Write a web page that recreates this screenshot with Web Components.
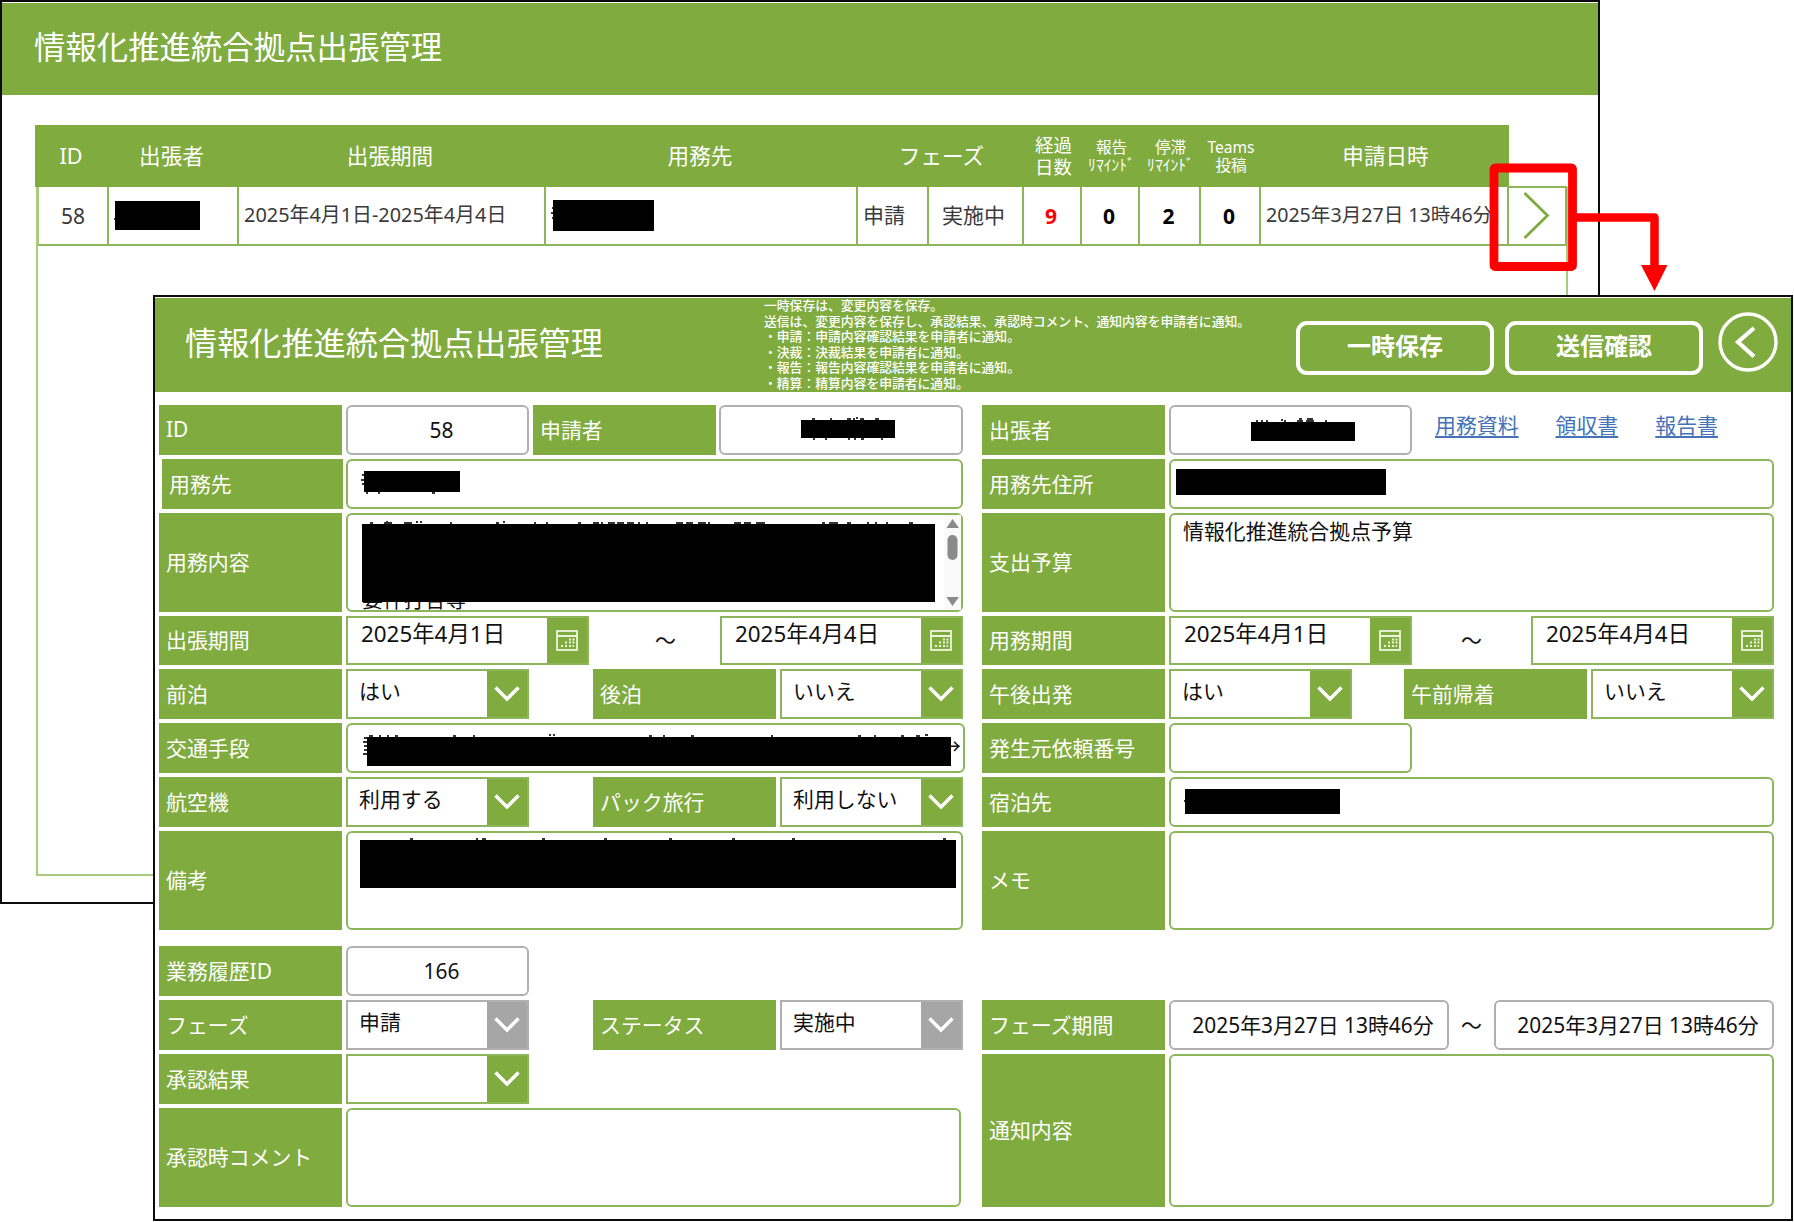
<!DOCTYPE html>
<html lang="ja">
<head>
<meta charset="utf-8">
<title>情報化推進統合拠点出張管理</title>
<style>
  body {
    margin: 0;
    position: relative;
    width: 1794px;
    height: 1222px;
    overflow: hidden;
    background: white;
    color: #111;
    font-family: "Noto Sans", "Noto Sans CJK JP", sans-serif;
    font-size: 20.9px;
    --green: #80ab3f;
    --line: #8db65a;
    --gray: #a6a6a6;
  }

  /* the two windows and the callout float freely on the sheet */
  app-window { position: absolute; }
  #list { left: 0; top: 0; width: 1600px; height: 904px; }
  #detail { left: 153px; top: 295px; width: 1640px; height: 926px; }
  call-out { position: absolute; left: 1489px; top: 162px; }

  .panels { display: flex; gap: 19px; padding: 12px 0 0 4px; }
  .left { width: 804px; }
  .right { width: 792px; }
  .section { display: grid; row-gap: 4px; }
  .main { grid-template-rows: 50px 50px 99px 49px 50px 50px 50px 99px; padding-top: 1px; }
  .review { grid-template-rows: 50px 50px 50px 99px; margin-top: 16px; }
  .tall { grid-row: 3 / span 2; }
  a { color: #4472b8; text-underline-offset: 3px; text-decoration-thickness: 2px; }
</style>
</head>
<body>

<app-window id="list">
  <title-bar class="list">情報化推進統合拠点出張管理</title-bar>
  <trip-list></trip-list>
</app-window>

<app-window id="detail">
  <title-bar class="detail">情報化推進統合拠点出張管理
    <help-text slot="help"></help-text>
    <outline-button slot="actions">一時保存</outline-button>
    <outline-button slot="actions">送信確認</outline-button>
    <back-button slot="actions"></back-button>
  </title-bar>

  <div class="panels">
    <div class="left">
      <div class="section main">
        <form-row>
          <field-label>ID</field-label>
          <text-field readonly center style="width:183px">58</text-field>
          <field-label>申請者</field-label>
          <text-field readonly style="flex:1;margin-left:-1px"><mask-bar marks="M11 -1 h3 M29 -1 h2 M46 -1 h4 M52 -1 h2 M55 -2 h2 M59 -1 h4 M74 -1 h4 M12 19 h2 M24 19 h2 M47 19 h2 M53 19 h2 M60 19 h3 M80 19 h2" style="--x:80px;--y:13px;--w:94px;--h:18px"></mask-bar></text-field>
        </form-row>
        <form-row>
          <field-label style="width:181px;margin-left:3px;margin-right:-1px">用務先</field-label>
          <text-field style="flex:1"><mask-bar marks="M-2 4 h2 M-3 9 h3 M-2 13 h2 M2 22 h2 M14 22 h2 M68 22 h3" style="--x:16px;--y:10px;--w:96px;--h:21px"></mask-bar></text-field>
        </form-row>
        <form-row>
          <field-label>用務内容</field-label>
          <text-field style="flex:1">
            <scroll-notes>要件打合等</scroll-notes>
          </text-field>
        </form-row>
        <form-row>
          <field-label>出張期間</field-label>
          <date-picker>2025年4月1日</date-picker>
          <range-mark style="flex:1;padding-left:22px">～</range-mark>
          <date-picker>2025年4月4日</date-picker>
        </form-row>
        <form-row>
          <field-label>前泊</field-label>
          <drop-down>はい</drop-down>
          <field-label style="margin-left:auto">後泊</field-label>
          <drop-down>いいえ</drop-down>
        </form-row>
        <form-row>
          <field-label>交通手段</field-label>
          <text-field style="flex:1;margin-right:-2px"><mask-bar marks="M-3 1 h3 M-4 5 h4 M-3 9 h3 M-3 13 h3 M-4 17 h4 M2 -1 h4 M12 -1 h2 M20 -1 h2 M28 -1 h3 M86 -1 h3 M106 -1 h2 M182 -2 h2 M186 -2 h2 M282 -1 h3 M296 -1 h2 M324 -1 h3 M404 -1 h2 M491 -1 h3 M507 -1 h2 M534 -1 h3 M549 -1 h4 M558 -2 h3" style="--x:19px;--y:12px;--w:584px;--h:29px"></mask-bar><span style="line-height:42px;margin-left:-11px">→</span></text-field>
        </form-row>
        <form-row>
          <field-label>航空機</field-label>
          <drop-down>利用する</drop-down>
          <field-label style="margin-left:auto">パック旅行</field-label>
          <drop-down>利用しない</drop-down>
        </form-row>
        <form-row>
          <field-label>備考</field-label>
          <text-field style="flex:1"><mask-bar marks="M50 -1 h3 M116 -1 h2 M122 -1 h4 M182 -1 h3 M244 -1 h3 M309 -1 h3 M372 -1 h3 M432 -1 h3 M583 -1 h3" style="--x:12px;--y:7px;--w:596px;--h:48px"></mask-bar></text-field>
        </form-row>
      </div>

      <div class="section review">
        <form-row>
          <field-label>業務履歴ID</field-label>
          <text-field readonly center style="width:183px">166</text-field>
        </form-row>
        <form-row>
          <field-label>フェーズ</field-label>
          <drop-down disabled>申請</drop-down>
          <field-label style="margin-left:auto">ステータス</field-label>
          <drop-down disabled>実施中</drop-down>
        </form-row>
        <form-row>
          <field-label>承認結果</field-label>
          <drop-down></drop-down>
        </form-row>
        <form-row>
          <field-label>承認時コメント</field-label>
          <text-field style="flex:1;margin-right:2px"></text-field>
        </form-row>
      </div>
    </div>

    <div class="right">
      <div class="section main">
        <form-row>
          <field-label>出張者</field-label>
          <text-field readonly style="width:243px"><mask-bar marks="M5 -1 h2 M10 -1 h2 M15 -1 h2 M30 -2 h2 M33 -1 h2 M46 -1 h6 M55 -1 h8 M48 -3 h3 M56 -3 h6 M74 -1 h2" style="--x:80px;--y:15px;--w:104px;--h:19px"></mask-bar></text-field>
          <link-list>
            <a href="#">用務資料</a>
            <a href="#">領収書</a>
            <a href="#">報告書</a>
          </link-list>
        </form-row>
        <form-row>
          <field-label>用務先住所</field-label>
          <text-field style="flex:1"><mask-bar style="--x:5px;--y:8px;--w:210px;--h:26px"></mask-bar></text-field>
        </form-row>
        <form-row>
          <field-label>支出予算</field-label>
          <text-field style="flex:1"><span style="padding:2px 12px">情報化推進統合拠点予算</span></text-field>
        </form-row>
        <form-row>
          <field-label>用務期間</field-label>
          <date-picker>2025年4月1日</date-picker>
          <range-mark style="flex:1">～</range-mark>
          <date-picker>2025年4月4日</date-picker>
        </form-row>
        <form-row>
          <field-label>午後出発</field-label>
          <drop-down>はい</drop-down>
          <field-label style="margin-left:auto">午前帰着</field-label>
          <drop-down>いいえ</drop-down>
        </form-row>
        <form-row>
          <field-label>発生元依頼番号</field-label>
          <text-field style="width:243px"></text-field>
        </form-row>
        <form-row>
          <field-label>宿泊先</field-label>
          <text-field style="flex:1"><mask-bar marks="M-1 12 h1" style="--x:14px;--y:10px;--w:155px;--h:25px"></mask-bar></text-field>
        </form-row>
        <form-row>
          <field-label>メモ</field-label>
          <text-field style="flex:1"></text-field>
        </form-row>
      </div>

      <div class="section review">
        <form-row style="grid-row:2">
          <field-label>フェーズ期間</field-label>
          <text-field readonly center style="width:280px">2025年3月27日 13時46分</text-field>
          <range-mark style="flex:1;margin:0 -4px">～</range-mark>
          <text-field readonly center style="width:280px">2025年3月27日 13時46分</text-field>
        </form-row>
        <form-row class="tall">
          <field-label>通知内容</field-label>
          <text-field style="flex:1"></text-field>
        </form-row>
      </div>
    </div>
  </div>
</app-window>

<call-out></call-out>

<script>
// Attach an open shadow root and fill it with the given markup
function render(element, html) {
  const shadow = element.attachShadow({ mode: "open" });
  const template = document.createElement("template");
  template.innerHTML = html;
  shadow.appendChild(template.content);
}

// Window frame
class AppWindow extends HTMLElement {
  constructor() {
    super();
    render(this, `
    <style>
      :host {
        display: block;
        box-sizing: border-box;
        border: 2px solid #0c0c0c;
        background: white;
        overflow: hidden;
      }
    </style>
    <slot></slot>`);
  }
}

// Green bar on top of a window, with optional help text and actions
class TitleBar extends HTMLElement {
  constructor() {
    super();
    render(this, `
    <style>
      :host {
        display: flex;
        box-sizing: border-box;
        margin-top: 1px;
        background: var(--green);
        color: white;
      }
      :host(.list) { height: 92px; padding-left: 32px; font-size: 31.4px; }
      :host(.detail) { height: 94px; padding: 0 13px 0 30px; font-size: 32.15px; }
      .title { line-height: 88px; white-space: nowrap; }
      :host(.detail) .title { width: 579px; line-height: 90px; }
      .actions { display: flex; margin-left: auto; gap: 11px; padding-top: 14px; }
    </style>
    <div class="title"><slot></slot></div>
    <slot name="help"></slot>
    <div class="actions"><slot name="actions"></slot></div>`);
  }
}

class HelpText extends HTMLElement {
  constructor() {
    super();
    render(this, `
    <style>
      :host { display: block; font-size: 12.8px; font-weight: 500; line-height: 15.5px; white-space: nowrap; }
      div { height: 15.5px; }
    </style>
    <div>一時保存は、変更内容を保存。</div>
    <div>送信は、変更内容を保存し、承認結果、承認時コメント、通知内容を申請者に通知。</div>
    <div>・申請：申請内容確認結果を申請者に通知。</div>
    <div>・決裁：決裁結果を申請者に通知。</div>
    <div>・報告：報告内容確認結果を申請者に通知。</div>
    <div>・精算：精算内容を申請者に通知。</div>`);
  }
}

class OutlineButton extends HTMLElement {
  constructor() {
    super();
    render(this, `
    <style>
      :host {
        display: block;
        box-sizing: border-box;
        width: 198px;
        height: 54px;
        margin-top: 9px;
        border: 4px solid white;
        border-radius: 11px;
        text-align: center;
        font-size: 24px;
        font-weight: bold;
        line-height: 42px;
      }
    </style>
    <slot></slot>`);
  }
}

class BackButton extends HTMLElement {
  constructor() {
    super();
    render(this, `
    <style>
      :host { display: block; margin-left: 4px; height: 60px; }
      svg { display: block; }
    </style>
    <svg width="60" height="60" fill="none" stroke="white">
      <circle cx="30" cy="30" r="28" stroke-width="3.4"/>
      <path d="M36 16 L20 30 L36 44.500" stroke-width="4.2"/>
    </svg>`);
  }
}

// List of trips with its header and a single record
class TripList extends HTMLElement {
  constructor() {
    super();
    render(this, `
    <style>
      :host { display: block; width: 1533px; margin: 30px 0 0 33px; font-size: 21.6px; }
      .head {
        display: grid;
        grid-template-columns: 72px 129px 308px 312px 168px 58px 58px 60px 61px 249px;
        width: 1474px;
        height: 62px;
        align-items: center;
        text-align: center;
        line-height: 30px;
        background: var(--green);
        color: white;
      }
      .head > div { padding-bottom: 1px; }
      .head > .two { font-size: 18.4px; line-height: 22px; padding: 0 0 0 1px; }
      .head > .small { font-size: 15.6px; line-height: 18.5px; padding: 0 0 0 1px; }
      .kana { font-size: 15.6px; }
      .body {
        box-sizing: border-box;
        height: 689px;
        margin-left: 1px;
        border: solid #a9cc7c;
        border-width: 0 2px 2px;
      }
      .row {
        display: grid;
        grid-template-columns: 69px 130px 307px 312px 71px 95px 58px 58px 61px 60px 248px 60px;
        grid-template-rows: 59px;
        height: 59px;
        color: #3a3a3a;
      }
      .row > div {
        box-sizing: border-box;
        border: solid var(--line);
        border-width: 0 0 2px 2px;
        line-height: 56px;
        white-space: nowrap;
      }
      .row > .id { border-left-color: #a9cc7c; border-left-width: 1px; text-align: center; font-size: 21px; line-height: 58px; }
      .period { font-size: 19.9px; padding-left: 5px; }
      .phase { padding-left: 5px; font-size: 21px; }
      .row > .num { text-align: center; font-weight: bold; font-size: 21px; color: black; line-height: 58px; padding-right: 2px; }
      .row > .late { color: #f00; }
      .date { font-size: 19.6px; padding-left: 5px; }
      .row > .go { margin-top: -1px; border-width: 2px; }
      svg { display: block; }
    </style>
    <div class="head">
      <div>ID</div><div>出張者</div><div>出張期間</div><div>用務先</div>
      <div style="padding-left:3px">フェーズ</div>
      <div class="two">経過<br>日数</div>
      <div class="small">報告<br><span class="kana">ﾘﾏｲﾝﾄﾞ</span></div>
      <div class="small">停滞<br><span class="kana">ﾘﾏｲﾝﾄﾞ</span></div>
      <div class="small">Teams<br>投稿</div>
      <div>申請日時</div>
    </div>
    <div class="body">
      <div class="row">
        <div class="id">58</div>
        <div><mask-bar marks="M-1 18 h1" style="--x:6px;--y:14px;--w:85px;--h:29px"></mask-bar></div>
        <div class="period">2025年4月1日-2025年4月4日</div>
        <div><mask-bar marks="M-1 8 h1 M-2 13 h2 M-1 18 h1" style="--x:7px;--y:13px;--w:101px;--h:31px"></mask-bar></div>
        <div class="phase">申請</div>
        <div class="phase" style="padding-left:13px">実施中</div>
        <div class="num late">9</div>
        <div class="num">0</div>
        <div class="num">2</div>
        <div class="num">0</div>
        <div class="date">2025年3月27日 13時46分</div>
        <div class="go">
          <svg width="56" height="56" fill="none" stroke="#80ab3f" stroke-width="2.800">
            <path d="M15.500 5 L38.500 27.500 L15.500 50"/>
          </svg>
        </div>
      </div>
    </div>`);
  }
}

class FormRow extends HTMLElement {
  constructor() {
    super();
    render(this, `
    <style>
      :host { display: flex; gap: 4px; min-width: 0; }
    </style>
    <slot></slot>`);
  }
}

class FieldLabel extends HTMLElement {
  constructor() {
    super();
    render(this, `
    <style>
      :host {
        display: flex;
        align-items: center;
        box-sizing: border-box;
        flex: none;
        width: 183px;
        padding: 0 0 3px 7px;
        background: var(--green);
        color: white;
        white-space: nowrap;
      }
    </style>
    <slot></slot>`);
  }
}

// Rounded input: gray outline when readonly, green otherwise
class TextField extends HTMLElement {
  constructor() {
    super();
    render(this, `
    <style>
      :host {
        display: flex;
        align-items: flex-start;
        box-sizing: border-box;
        min-width: 0;
        border: 2px solid var(--line);
        border-radius: 6px;
        line-height: 28px;
        white-space: nowrap;
      }
      :host([readonly]) { border-color: #b0b0b0; }
      :host([center]) { align-items: center; justify-content: center; padding: 0 0 1px 8px; }
    </style>
    <slot></slot>`);
  }
}

// Black bar over a withheld value; "marks" are the stroke ends that show around it
class MaskBar extends HTMLElement {
  constructor() {
    super();
    render(this, `
    <style>
      :host {
        display: block;
        flex: none;
        position: relative;
        width: var(--w);
        height: var(--h);
        margin: var(--y) 0 0 var(--x);
        background: black;
      }
      svg { display: block; overflow: visible; }
    </style>
    <svg width="1" height="1" fill="none" stroke="#333" stroke-width="2">
      <path/>
    </svg>`);
  }

  connectedCallback() {
    this.shadowRoot.querySelector("path").setAttribute("d", this.getAttribute("marks") || "");
  }
}

// Multi-line note, scrolled so that its last line meets the lower edge
class ScrollNotes extends HTMLElement {
  constructor() {
    super();
    render(this, `
    <style>
      :host { display: flex; width: 100%; height: 95px; }
      .text { width: 573px; margin-left: 14px; }
      .last { line-height: 21px; height: 21px; margin-top: -13px; }
      svg { display: block; margin-left: auto; }
    </style>
    <div class="text">
      <mask-bar marks="M8 -1 h3 M22 -1 h8 M24 -2 h2 M42 -1 h8 M54 -2 h2 M58 -2 h2 M88 -1 h2 M134 -1 h3 M141 -2 h2 M172 -1 h2 M184 -1 h2 M216 -1 h3 M231 -1 h6 M239 -1 h2 M246 -1 h7 M255 -1 h7 M265 -1 h7 M276 -1 h2 M284 -1 h2 M314 -1 h7 M324 -1 h7 M336 -1 h8 M346 -1 h2 M372 -1 h7 M382 -1 h7 M394 -1 h9 M460 -1 h3 M467 -1 h9 M485 -1 h4 M505 -1 h2 M513 -1 h2 M524 -1 h2 M547 -1 h4" style="--x:0;--y:9px;--w:573px;--h:78px;z-index:1"></mask-bar>
      <div class="last"><slot></slot></div>
    </div>
    <svg width="17" height="95">
      <rect width="17" height="95" fill="#fafafa"/>
      <path d="M2.500 13 L8.500 4 L15 13 Z M2.500 82 L8.500 91 L15 82 Z" fill="#8a8a8a"/>
      <rect x="3.500" y="20" width="10" height="25" rx="5" fill="#8a8a8a"/>
    </svg>`);
  }
}

class DatePicker extends HTMLElement {
  constructor() {
    super();
    render(this, `
    <style>
      :host {
        display: flex;
        box-sizing: border-box;
        flex: none;
        width: 243px;
        border: 2px solid var(--line);
      }
      .value { flex: 1; padding-left: 13px; font-size: 22.4px; line-height: 32px; white-space: nowrap; }
      .button { display: flex; align-items: center; justify-content: center; width: 40px; background: var(--green); }
    </style>
    <div class="value"><slot></slot></div>
    <div class="button">
      <svg width="22" height="21" fill="none" stroke="#eef5df">
        <rect x="1" y="1" width="20" height="19" stroke-width="1.800"/>
        <path d="M1 6 H21" stroke-width="2"/>
        <path d="M13 9.500 H15 M16.500 9.500 H18.500 M9 12.500 H11 M13 12.500 H15 M16.500 12.500 H18.500 M5 16 H7 M9 16 H11 M13 16 H15 M16.500 16 H18" stroke-width="2"/>
      </svg>
    </div>`);
  }
}

class DropDown extends HTMLElement {
  constructor() {
    super();
    render(this, `
    <style>
      :host {
        display: flex;
        box-sizing: border-box;
        flex: none;
        width: 183px;
        border: 2px solid var(--line);
      }
      :host([disabled]) { border-color: #b0b0b0; }
      .value { flex: 1; padding-left: 11px; line-height: 41px; white-space: nowrap; }
      .button { display: flex; align-items: center; justify-content: center; width: 40px; background: var(--green); }
      :host([disabled]) .button { background: var(--gray); }
    </style>
    <div class="value"><slot></slot></div>
    <div class="button">
      <svg width="28" height="18" fill="none" stroke="white" stroke-width="3.400">
        <path d="M2.500 2.500 L14 14 L25.500 2.500"/>
      </svg>
    </div>`);
  }
}

class RangeMark extends HTMLElement {
  constructor() {
    super();
    render(this, `
    <style>
      :host { display: flex; align-items: center; justify-content: center; padding-bottom: 3px; }
    </style>
    <slot></slot>`);
  }
}

class LinkList extends HTMLElement {
  constructor() {
    super();
    render(this, `
    <style>
      :host { display: flex; gap: 37px; padding-left: 19px; line-height: 40px; white-space: nowrap; }
    </style>
    <slot></slot>`);
  }
}

// Red frame around the open button, with an arrow to the detail window
class CallOut extends HTMLElement {
  constructor() {
    super();
    render(this, `
    <style>
      :host { display: block; }
      svg { display: block; }
    </style>
    <svg width="180" height="130" fill="none" stroke="red">
      <rect x="5" y="6" width="78.500" height="98.500" rx="1" stroke-width="8.800" stroke-linejoin="round"/>
      <path d="M86 55.500 H165.500 V106" stroke-width="8.500" stroke-linejoin="round"/>
      <path d="M152 103 H178.500 L165.500 129 Z" fill="red" stroke="none"/>
    </svg>`);
  }
}

customElements.define("app-window", AppWindow);
customElements.define("title-bar", TitleBar);
customElements.define("help-text", HelpText);
customElements.define("outline-button", OutlineButton);
customElements.define("back-button", BackButton);
customElements.define("trip-list", TripList);
customElements.define("form-row", FormRow);
customElements.define("field-label", FieldLabel);
customElements.define("text-field", TextField);
customElements.define("mask-bar", MaskBar);
customElements.define("scroll-notes", ScrollNotes);
customElements.define("date-picker", DatePicker);
customElements.define("drop-down", DropDown);
customElements.define("range-mark", RangeMark);
customElements.define("link-list", LinkList);
customElements.define("call-out", CallOut);
</script>
</body>
</html>
